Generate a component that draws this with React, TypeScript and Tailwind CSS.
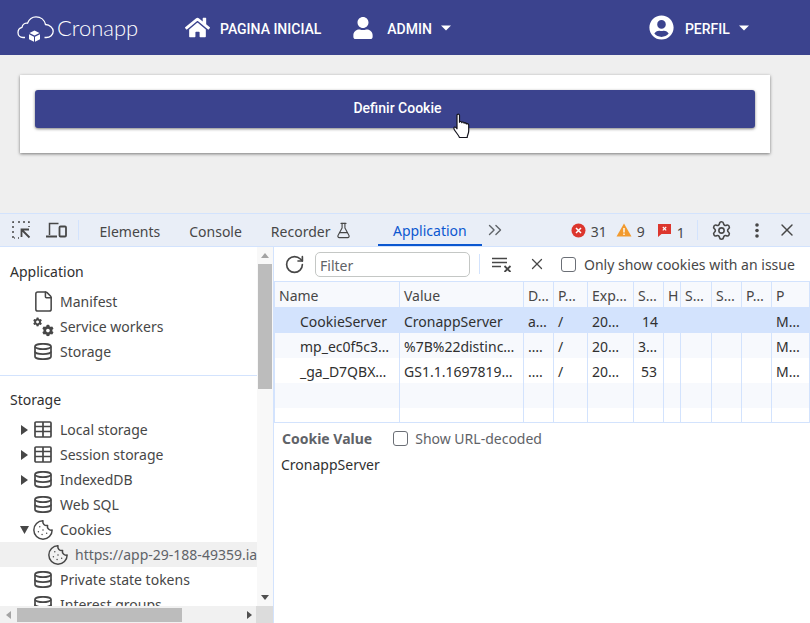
import React from "react";
import { Cookie, File, RotateCw, Settings, X, ChevronsRight, FlaskConical } from "lucide-react";
import { FaCog, FaHome, FaUser, FaUserCircle } from "react-icons/fa";

const DEVTOOLS_FONT = "font-['Noto_Sans',sans-serif]";

const Caret = () => (
    <svg width="10" height="6" viewBox="0 0 10 6" className="ml-[9px]">
        <path d="M0 0.5h10L5 5.5z" fill="#fff" />
    </svg>
);

const Logo = () => (
    <div className="flex w-[122px] items-center">
        <svg width="37" height="26" viewBox="0 0 37 26" fill="none" stroke="#fff" strokeWidth="1.300" className="mt-[2px]">
            <path d="M8 21.500H6C3 21.500 1 19.200 1 16.500c0-2.500 1.700-4.600 4-5.200C5.500 8.500 8 6.800 10.500 7.200 12 3.500 15 .8 19 .8c4.800 0 8.500 3.200 9.500 7.700 4.200.2 7.700 3.300 7.700 6.800 0 3.500-3 6.200-7 6.200h-1.700" />
            <path d="M22.500 15.500l5 2.500-5 2.500-5-2.500z" fill="#fff" stroke="none" transform="translate(-5 -1)" />
            <path d="M12 18.200l5 2.500v5l-5-2.500zM23 18.200l-5 2.500v5l5-2.500z" fill="#fff" stroke="none" />
        </svg>
        <span className="ml-[3px] font-['Lato',sans-serif] text-[22px] font-light leading-none text-white">Cronapp</span>
    </div>
);

const Navbar = () => (
    <div className="flex h-[55px] items-center bg-[#3b438e] pl-[17px] text-white font-['Roboto',sans-serif] text-[14px] font-medium">
        <Logo />
        <FaHome size={25} className="ml-[46px]" />
        <span className="ml-[10px] pt-[3px]">PAGINA INICIAL</span>
        <FaUser size={22} className="ml-[31px]" />
        <span className="ml-[13px] pt-[3px]">ADMIN</span>
        <Caret />
        <FaUserCircle size={25} className="ml-[198px]" />
        <span className="ml-[11px] pt-[3px]">PERFIL</span>
        <Caret />
    </div>
);

const HandCursor = () => (
    <svg width="17" height="26" viewBox="0 0 17 26" className="absolute left-[453px] top-[113px]">
        <path
            d="M4 2.200c0-1.500 2.500-1.500 2.500 0v7c0-1 2.300-1 2.300 0.500 0-1 2.300-1 2.300 0.500 0-1 2.300-.8 2.300.8 0-.8 2.300-.8 2.300 1v6c0 3-1.500 4-1.500 6.500H6.500C5.500 22 3 19.500 1.500 17c-1-1.700-.8-3 .4-3 .8 0 1.500.8 2.100 1.800z"
            fill="#fff"
            stroke="#14141e"
            strokeWidth="1.200"
            strokeLinejoin="round"
        />
    </svg>
);

const InspectIcon = () => (
    <svg width="20" height="20" viewBox="0 0 20 20" fill="none" stroke="#474747" strokeWidth="1.500">
        <path d="M2 3V2h2M7 2h2M12 2h2M17 2h1v1M2 6v2M2 11v2M2 16v2h2M7 18h1M18 6v1" strokeDasharray="2 1.200" />
        <path d="M18 9.500H10.500V17M11 10l7.500 7.500" strokeWidth="1.800" />
    </svg>
);

const DeviceIcon = () => (
    <svg width="21" height="16" viewBox="0 0 21 16" fill="none" stroke="#474747" strokeWidth="1.500">
        <path d="M3.500 13V1.500h9" />
        <path d="M0 14.500h11" strokeWidth="2" />
        <rect x="13.500" y="4.500" width="6.500" height="10" rx="1" strokeWidth="1.800" />
    </svg>
);

const ErrorIcon = () => (
    <svg width="15" height="15" viewBox="0 0 15 15">
        <circle cx="7.500" cy="7.500" r="7" fill="#dc362e" />
        <path d="M5 5l5 5M10 5l-5 5" stroke="#fff" strokeWidth="1.500" />
    </svg>
);

const WarningIcon = () => (
    <svg width="16" height="14" viewBox="0 0 16 14">
        <path d="M8 0.500L15.500 13.500H0.500z" fill="#f29a2e" />
        <path d="M8 5v4.500M8 10.500v1.500" stroke="#fff" strokeWidth="1.400" />
    </svg>
);

const IssueIcon = () => (
    <svg width="13" height="14" viewBox="0 0 13 14">
        <path d="M0 1h13v10H3.500L0 14z" fill="#dc362e" />
        <path d="M4.800 4l3.400 3.400M8.200 4L4.800 7.400" stroke="#fff" strokeWidth="1.100" />
    </svg>
);

const ClearIcon = () => (
    <svg width="20" height="15" viewBox="0 0 20 15" fill="none" stroke="#474747">
        <path d="M0 1.500h15M0 5.500h15M0 9.500h9" strokeWidth="1.500" />
        <path d="M12.500 9l6 6M18.500 9l-6 6" strokeWidth="1.800" />
    </svg>
);

const TableIcon = () => (
    <svg width="18" height="17" viewBox="0 0 18 17" fill="none" stroke="#474747" strokeWidth="1.700">
        <rect x="1" y="1" width="16" height="15" rx="1" />
        <path d="M1 5.500h16M1 10.500h16M9 1v15" />
    </svg>
);

const DbIcon = () => (
    <svg width="18" height="17" viewBox="0 0 18 17" fill="none" stroke="#474747" strokeWidth="1.700">
        <ellipse cx="9" cy="3.500" rx="8" ry="2.700" />
        <path d="M1 3.500v10c0 1.500 3.600 2.700 8 2.700s8-1.200 8-2.700v-10" />
        <path d="M1 8.500c0 1.500 3.600 2.700 8 2.700s8-1.200 8-2.700" />
    </svg>
);

const Arrow = ({ open }: { open?: boolean }) => (
    <svg width="9" height="10" viewBox="0 0 9 10">
        <path d={open ? "M0 1h9L4.500 9z" : "M1 0v10l7-5z"} fill="#474747" />
    </svg>
);

const Tab = (props: { label: string; active?: boolean; children?: React.ReactNode }) => (
    <div
        className={`flex h-full items-center pt-[2px] ${
            props.active ? "border-b-2 border-[#0b57d0] px-[15px] text-[#0b57d0]" : "px-[14.5px] text-[#474747]"
        }`}
    >
        {props.label}
        {props.children}
    </div>
);

const DevtoolsBar = () => (
    <div className="flex h-[34px] items-center border-y border-[#d3e3fd] bg-[#e9eef7] text-[14px] text-[#474747]">
        <div className="ml-[11px] flex w-[67px] items-center">
            <InspectIcon />
            <div className="ml-[15px]">
                <DeviceIcon />
            </div>
        </div>
        <div className="h-[20px] w-px bg-[#d3e3fd]" />
        <div className="ml-[6px] flex h-full items-center">
            <Tab label="Elements" />
            <Tab label="Console" />
            <Tab label="Recorder">
                <FlaskConical size={17} strokeWidth={1.6} className="ml-[5px] mr-[11px] -mt-[2px]" />
            </Tab>
            <Tab label="Application" active />
        </div>
        <ChevronsRight size={22} strokeWidth={1.500} className="ml-[2px] text-[#5f6368]" />
        <div className="ml-[65px] flex items-center">
            <ErrorIcon />
            <span className="ml-[5px] pt-[2px]">31</span>
            <div className="ml-[9px]">
                <WarningIcon />
            </div>
            <span className="ml-[5px] pt-[2px]">9</span>
            <div className="ml-[13px]">
                <IssueIcon />
            </div>
            <span className="ml-[6px] mt-[5px]">1</span>
        </div>
        <div className="ml-[12px] h-[20px] w-px bg-[#d3e3fd]" />
        <Settings size={21} strokeWidth={1.800} className="ml-[13px]" />
        <svg width="4" height="15" viewBox="0 0 4 15" className="ml-[23px]" fill="#474747">
            <circle cx="2" cy="2" r="1.800" />
            <circle cx="2" cy="7.500" r="1.800" />
            <circle cx="2" cy="13" r="1.800" />
        </svg>
        <X size={20} strokeWidth={1.700} className="ml-[18px]" />
    </div>
);

const TreeRow = (props: {
    label: string;
    icon: React.ReactNode;
    arrow?: "open" | "closed";
    child?: boolean;
    selected?: boolean;
}) => (
    <div
        className={`flex h-[25px] shrink-0 items-center whitespace-nowrap ${props.child ? "pl-[35px]" : "pl-[20px]"} ${
            props.selected ? "bg-[#f0f0f0] text-[#5f6368]" : ""
        }`}
    >
        <div className="flex w-[13px] shrink-0 items-center">
            {props.arrow && <Arrow open={props.arrow === "open"} />}
        </div>
        <div className="flex h-[20px] w-[20px] shrink-0 items-center justify-center text-[#474747]">{props.icon}</div>
        <span className="ml-[7px]">{props.label}</span>
    </div>
);

const db = <DbIcon />;
const cookie = <Cookie size={22} strokeWidth={1.600} className="shrink-0" />;

const Sidebar = () => (
    <div className="flex w-[274px] shrink-0 flex-col border-r border-[#d3e3fd]">
        <div className="flex min-h-0 flex-1">
            <div className="w-[257px] shrink-0 overflow-hidden pt-[12px] text-[14px] text-[#474747]">
                <div className="flex h-[25px] items-center pl-[10px] text-[#303030]">Application</div>
                <div className="mt-[5px]">
                    <TreeRow label="Manifest" icon={<File size={23} strokeWidth={1.600} className="shrink-0" />} />
                    <TreeRow
                        label="Service workers"
                        icon={
                            <div className="flex h-[20px] w-[21px] shrink-0 justify-between">
                                <FaCog size={10} className="self-start" />
                                <FaCog size={13} className="self-end" />
                            </div>
                        }
                    />
                    <TreeRow label="Storage" icon={db} />
                </div>
                <div className="mt-[11px] border-t border-[#d3e3fd] pt-[11px]">
                    <div className="flex h-[25px] items-center pl-[10px] text-[#303030]">Storage</div>
                    <div className="mt-[5px]">
                        <TreeRow label="Local storage" arrow="closed" icon={<TableIcon />} />
                        <TreeRow label="Session storage" arrow="closed" icon={<TableIcon />} />
                        <TreeRow label="IndexedDB" arrow="closed" icon={db} />
                        <TreeRow label="Web SQL" icon={db} />
                        <TreeRow label="Cookies" arrow="open" icon={cookie} />
                        <TreeRow label="https://app-29-188-49359.ia.cronapp.io" child selected icon={cookie} />
                        <TreeRow label="Private state tokens" icon={db} />
                        <TreeRow label="Interest groups" icon={db} />
                    </div>
                </div>
            </div>
            <div className="flex w-[16px] shrink-0 flex-col items-center bg-[#f8f8f8]">
                <svg width="8" height="5" viewBox="0 0 8 5" className="mt-[6px]">
                    <path d="M4 0l4 5H0z" fill="#a3a3a3" />
                </svg>
                <div className="mt-[6px] h-[125px] w-[14px] bg-[#bcbcbc]" />
                <svg width="8" height="5" viewBox="0 0 8 5" className="mt-auto mb-[6px]">
                    <path d="M0 0h8L4 5z" fill="#505050" />
                </svg>
            </div>
        </div>
        <div className="flex h-[17px] shrink-0 items-center bg-[#f1f1f1]">
            <svg width="5" height="8" viewBox="0 0 5 8" className="ml-[6px]">
                <path d="M5 0v8L0 4z" fill="#a3a3a3" />
            </svg>
            <div className="ml-[6px] h-[14px] w-[165px] bg-[#bcbcbc]" />
            <svg width="5" height="8" viewBox="0 0 5 8" className="ml-[65px]">
                <path d="M0 0v8l5-4z" fill="#505050" />
            </svg>
            <div className="ml-auto h-full w-[17px] bg-[#dcdcdc]" />
        </div>
    </div>
);

const columns = [
    "w-[125px]",
    "w-[124px]",
    "w-[30px]",
    "w-[34px]",
    "w-[46px]",
    "w-[30px]",
    "w-[17px]",
    "w-[31px]",
    "w-[30px]",
    "w-[30px]",
    "flex-1",
];

const header = ["Name", "Value", "D…", "P…", "Exp…", "S…", "H", "S…", "S…", "P…", "P"];

const rows = [
    ["CookieServer", "CronappServer", "a…", "/", "20…", "14", "", "", "", "", "M…"],
    ["mp_ec0f5c3…", "%7B%22distinc…", "….", "/", "20…", "3…", "", "", "", "", "M…"],
    ["_ga_D7QBX…", "GS1.1.1697819…", "….", "/", "20…", "53", "", "", "", "", "M…"],
];

const cellClass = (i: number) =>
    `${columns[i]} flex h-full shrink-0 items-center overflow-hidden whitespace-nowrap pt-[2px] ${
        i === 0 ? "pl-[25px]" : "pl-[4px]"
    } ${i === 5 ? "justify-end pr-[6px]" : ""}`;

const CookieTable = () => (
    <div className="h-[142px] border-y border-l border-[#d3e3fd] text-[14px] text-[#303030]">
        <div className="flex h-[25px] bg-[#f7f9fd]">
            {header.map((h, i) => (
                <div
                    key={i}
                    className={`${columns[i]} flex h-full shrink-0 items-center overflow-hidden whitespace-nowrap border-r border-[#d3e3fd] pl-[4px] pt-[1px] text-[#474747]`}
                >
                    {h}
                </div>
            ))}
        </div>
        {rows.map((row, r) => (
            <div key={r} className={`flex ${r === 0 ? "h-[26px] bg-[#d3e3fd]" : r === 1 ? "h-[25px] bg-[#f7f9fd]" : "h-[25px] bg-white"}`}>
                {row.map((c, i) => (
                    <div key={i} className={`${cellClass(i)} ${r === 0 ? "" : "border-r border-[#d3e3fd]"}`}>
                        {c}
                    </div>
                ))}
            </div>
        ))}
        {["h-[25px] bg-[#f7f9fd]", "h-[14px] bg-white"].map((bg, r) => (
            <div key={r} className={`flex ${bg}`}>
                {columns.map((w, i) => (
                    <div key={i} className={`${w} h-full shrink-0 border-r border-[#d3e3fd]`} />
                ))}
            </div>
        ))}
    </div>
);

const Checkbox = () => (
    <input
        type="checkbox"
        readOnly
        className="h-[15px] w-[15px] shrink-0 appearance-none rounded-[3px] border border-[#6b6f76] bg-white"
    />
);

const CookiesPanel = () => (
    <div className="flex min-w-0 flex-1 flex-col">
        <div className="flex h-[34px] shrink-0 items-center text-[14px] text-[#474747]">
            <RotateCw size={21} strokeWidth={1.900} className="ml-[10px]" />
            <input
                placeholder="Filter"
                readOnly
                className="ml-[10px] h-[25px] w-[155px] rounded-[5px] border border-[#c4c7c5] px-[4px] pt-[2px] text-[14px] placeholder-[#5f6368] outline-none"
            />
            <div className="ml-[9px] h-[20px] w-px bg-[#d3e3fd]" />
            <div className="ml-[12px]">
                <ClearIcon />
            </div>
            <X size={18} strokeWidth={1.700} className="ml-[16px]" />
            <div className="ml-[15px] flex items-center">
                <Checkbox />
                <span className="ml-[8px] whitespace-nowrap">Only show cookies with an issue</span>
            </div>
        </div>
        <CookieTable />
        <div className="flex h-[30px] items-center pl-[8px] pt-[1px] text-[14px] text-[#5f6368]">
            <span className="font-bold">Cookie Value</span>
            <div className="ml-[21px] flex items-center">
                <Checkbox />
                <span className="ml-[7px]">Show URL-decoded</span>
            </div>
        </div>
        <div className="pl-[7px] pt-[1px] text-[14px] text-[#303030]">CronappServer</div>
    </div>
);

const App = () => {
    return (
        <div className="relative flex h-[623px] w-[810px] flex-col overflow-hidden bg-white">
            <Navbar />
            <div className="h-[158px] shrink-0 bg-[#efefef] pl-[20px] pt-[20px]">
                <div className="h-[78px] w-[750px] bg-white p-[15px] shadow-[0_1px_3px_rgba(0,0,0,0.5)]">
                    <div className="flex h-[38px] items-center justify-center rounded-[3px] bg-[#3b438e] pl-[5px] pb-[1px] font-['Roboto',sans-serif] text-[14px] font-medium text-white shadow-[0_1px_3px_rgba(0,0,0,0.5)]">
                        Definir Cookie
                    </div>
                </div>
            </div>
            <div className={`flex min-h-0 flex-1 flex-col ${DEVTOOLS_FONT}`}>
                <DevtoolsBar />
                <div className="flex min-h-0 flex-1">
                    <Sidebar />
                    <CookiesPanel />
                </div>
            </div>
            <HandCursor />
        </div>
    );
};

export default App;
